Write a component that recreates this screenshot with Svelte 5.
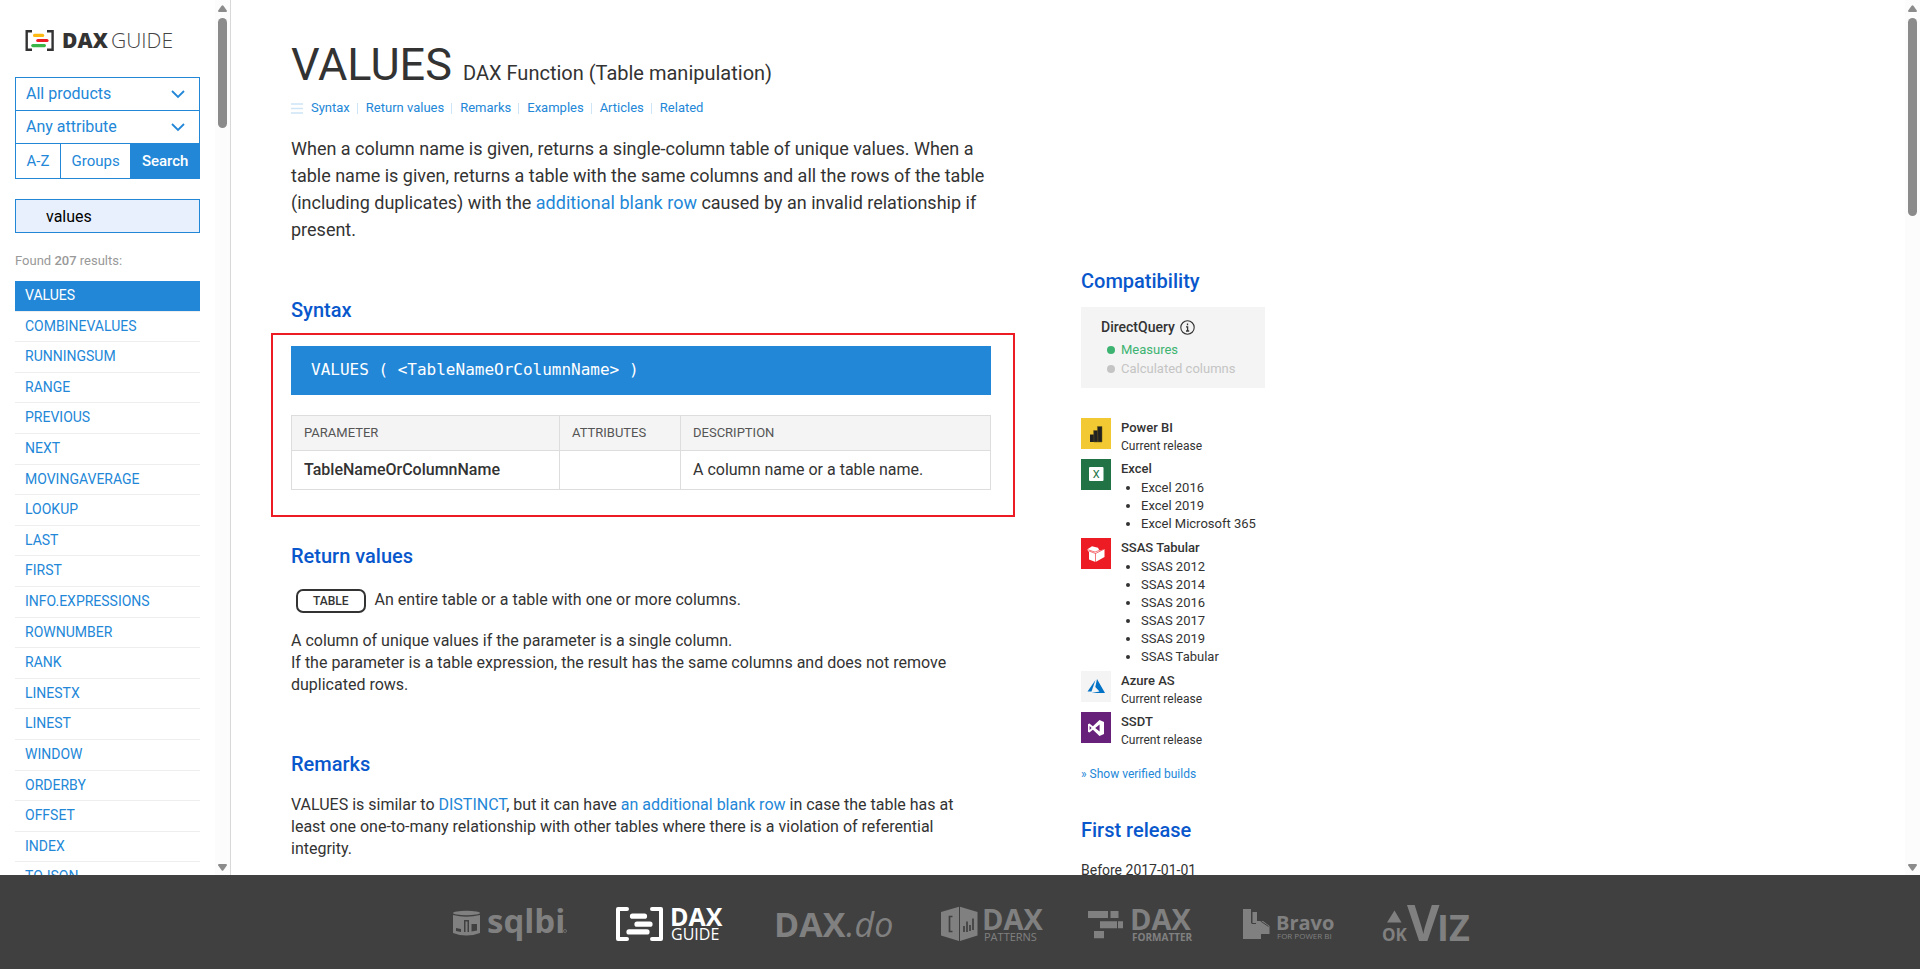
<script lang="ts">
    let product = $state('All products');
    let attribute = $state('Any attribute');
    let query = $state('values');
    let view = $state('Search');

    const views = ['A-Z', 'Groups', 'Search'];

    const results = [
        'VALUES', 'COMBINEVALUES', 'RUNNINGSUM', 'RANGE', 'PREVIOUS', 'NEXT', 'MOVINGAVERAGE',
        'LOOKUP', 'LAST', 'FIRST', 'INFO.EXPRESSIONS', 'ROWNUMBER', 'RANK', 'LINESTX', 'LINEST',
        'WINDOW', 'ORDERBY', 'OFFSET', 'INDEX', 'TOJSON'
    ];

    const toc = ['Syntax', 'Return values', 'Remarks', 'Examples', 'Articles', 'Related'];

    const products = [
        { id: 'powerbi', name: 'Power BI', versions: [] },
        { id: 'excel', name: 'Excel', versions: ['Excel 2016', 'Excel 2019', 'Excel Microsoft 365'] },
        { id: 'ssas', name: 'SSAS Tabular', versions: ['SSAS 2012', 'SSAS 2014', 'SSAS 2016', 'SSAS 2017', 'SSAS 2019', 'SSAS Tabular'] },
        { id: 'azure', name: 'Azure AS', versions: [] },
        { id: 'ssdt', name: 'SSDT', versions: [] }
    ];
</script>

{#snippet scrollbar(size: number)}
    <div class="scrollbar" aria-hidden="true">
        <svg width="9" height="7" viewBox="0 0 9 7"><path d="M3.6 .8Q4.5-.4 5.4.8L8.8 5.6Q9.2 7 8 7H1Q-.2 7 .2 5.6Z" /></svg>
        <div class="thumb" style="height: {size}px"></div>
        <svg class="down" width="9" height="7" viewBox="0 0 9 7"><path d="M3.6 6.2Q4.5 7.4 5.4 6.2L8.8 1.4Q9.2 0 8 0H1Q-.2 0 .2 1.4Z" /></svg>
    </div>
{/snippet}

{#snippet chevron()}
    <svg class="chevron" width="14" height="9" viewBox="0 0 14 9"><path d="M1 1l6 6 6-6" fill="none" stroke="currentColor" stroke-width="1.8" /></svg>
{/snippet}

<div class="app">
    <div class="body">
        <aside class="sidebar">
            <div class="sidebar-content">
                <a class="logo" href="#home" aria-label="DAX Guide">
                    <svg width="150" height="24" viewBox="0 0 150 24">
                        <g fill="none" stroke="#333" stroke-width="2.4">
                            <path d="M7 2.2H1.7v18.6H7M22 2.2h5.6v18.6H22" />
                        </g>
                        <g stroke-width="3.2" stroke-linecap="round">
                            <path d="M9.6 6.4h8" stroke="#fdb913" />
                            <path d="M12.8 11.5h9.2" stroke="#ed1c24" />
                            <path d="M7.8 16.6h11.6" stroke="#39b54a" />
                        </g>
                        <text x="37" y="19" font-size="21" font-weight="800" fill="#333">DAX</text>
                        <text x="86" y="19" font-size="21" font-weight="300" fill="#444">GUIDE</text>
                    </svg>
                </a>

                <div class="filters">
                    <div class="select">
                        <select aria-label="Product" bind:value={product}>
                            <option>All products</option>
                            <option>Power BI</option>
                            <option>Excel</option>
                        </select>
                        {@render chevron()}
                    </div>
                    <div class="select">
                        <select aria-label="Attribute" bind:value={attribute}>
                            <option>Any attribute</option>
                            <option>Deprecated</option>
                        </select>
                        {@render chevron()}
                    </div>
                    <div class="views">
                        {#each views as name}
                            <button class:active={view === name} onclick={() => (view = name)}>{name}</button>
                        {/each}
                    </div>
                </div>

                <input class="search" type="text" aria-label="Search functions" bind:value={query} />
                <p class="found">Found <b>207</b> results:</p>

                <ul class="results">
                    {#each results as name, i}
                        <li class:current={i === 0}><a href="#{name}">{name}</a></li>
                    {/each}
                </ul>
            </div>
            {@render scrollbar(110)}
        </aside>

        <main class="page">
            <div class="content">
                <header>
                    <h1>VALUES <small>DAX Function (Table manipulation)</small></h1>
                    <nav class="toc">
                        <svg width="12" height="11" viewBox="0 0 12 11"><path d="M0 1h12M0 5.5h12M0 10h12" stroke="#cde5f7" stroke-width="1.6" /></svg>
                        {#each toc as name}
                            <a href="#{name}">{name}</a>
                        {/each}
                    </nav>
                    <p class="intro">
                        When a column name is given, returns a single-column table of unique values. When a table
                        name is given, returns a table with the same columns and all the rows of the table
                        (including duplicates) with the <a href="#blank-row">additional blank row</a> caused by an
                        invalid relationship if present.
                    </p>
                </header>

                <div class="columns">
                    <article>
                        <h2>Syntax</h2>
                        <div class="highlight">
                            <pre>VALUES ( &lt;TableNameOrColumnName&gt; )</pre>
                            <table>
                                <colgroup><col class="col-name" /><col class="col-attr" /><col /></colgroup>
                                <thead>
                                    <tr><th>Parameter</th><th>Attributes</th><th>Description</th></tr>
                                </thead>
                                <tbody>
                                    <tr><td><b>TableNameOrColumnName</b></td><td></td><td>A column name or a table name.</td></tr>
                                </tbody>
                            </table>
                        </div>

                        <h2>Return values</h2>
                        <div class="return-type">
                            <span class="badge">TABLE</span>
                            <span>An entire table or a table with one or more columns.</span>
                        </div>
                        <p class="return-text">
                            A column of unique values if the parameter is a single column.<br />
                            If the parameter is a table expression, the result has the same columns and does not
                            remove duplicated rows.
                        </p>

                        <h2 class="spaced">Remarks</h2>
                        <p>
                            VALUES is similar to <a href="#DISTINCT">DISTINCT</a>, but it can have
                            <a href="#blank-row">an additional blank row</a> in case the table has at least one
                            one-to-many relationship with other tables where there is a violation of referential
                            integrity.
                        </p>
                    </article>

                    <aside class="details">
                        <h2>Compatibility</h2>
                        <div class="directquery">
                            <h3>
                                DirectQuery
                                <svg width="15" height="15" viewBox="0 0 15 15">
                                    <circle cx="7.5" cy="7.5" r="6.7" fill="none" stroke="#333" stroke-width="1.1" />
                                    <path d="M7.5 3.4v1.8M6 6.8h1.6v4.2M6 11h3.2" fill="none" stroke="#333" stroke-width="1.3" />
                                </svg>
                            </h3>
                            <p class="on">Measures</p>
                            <p class="off">Calculated columns</p>
                        </div>

                        <ul class="products">
                            {#each products as p}
                                <li class={p.id}>
                                    <svg width="30" height="31" viewBox="0 0 30 31">
                                        {#if p.id === 'powerbi'}
                                            <path d="M9 16.5h4V24H9z" fill="#222" />
                                            <path d="M12.6 12.5h4.4V24h-4z" fill="#222" stroke="#6b5a1a" stroke-width=".5" />
                                            <path d="M16.4 8.5H21V24h-4z" fill="#222" stroke="#6b5a1a" stroke-width=".5" />
                                        {:else if p.id === 'excel'}
                                            <rect x="8" y="8" width="14.5" height="14" rx="1" fill="#fff" />
                                            <text x="15.2" y="19" font-size="11" text-anchor="middle" fill="#217346">X</text>
                                        {:else if p.id === 'ssas'}
                                            <path d="M6 11.5l5-3.300 6 1.500 1.500 3L23.500 11v8L14.500 24l-6.500-2.500V14z" fill="#fff" />
                                            <path d="M8 13l6.500 2.500L23.500 11M14.500 15.500V24M6 11.500l8 2.500 4-1.500" fill="none" stroke="#ed1c24" stroke-width=".6" />
                                        {:else if p.id === 'azure'}
                                            <path d="M14.500 9L6.500 20.500h4z" fill="#0072c6" />
                                            <path d="M16 8l8 14H10.500l8-1.500-4.200-4.500z" fill="#0072c6" />
                                        {:else}
                                            <path d="M18.500 8L23 10v12l-4.500 2-6.600-6.200L8.400 20.500 7 19.800v-7.600l1.400-.7 3.500 2.700zM18.600 12.500L14.200 16l4.400 3.500zM8.600 14v4l2-2z" fill="#fff" fill-rule="evenodd" />
                                        {/if}
                                    </svg>
                                    <div>
                                        <h4>{p.name}</h4>
                                        {#if p.versions.length}
                                            <ul class="versions">
                                                {#each p.versions as version}
                                                    <li>{version}</li>
                                                {/each}
                                            </ul>
                                        {:else}
                                            <p>Current release</p>
                                        {/if}
                                    </div>
                                </li>
                            {/each}
                        </ul>
                        <a class="builds" href="#builds">» Show verified builds</a>

                        <h2>First release</h2>
                        <p class="release">Before 2017-01-01</p>
                    </aside>
                </div>
            </div>
            {@render scrollbar(198)}
        </main>
    </div>

    <footer>
        <a href="#sqlbi" aria-label="SQLBI">
            <svg width="114" height="40" viewBox="0 0 114 40">
                <ellipse cx="13.500" cy="11" rx="13.500" ry="2.200" />
                <path d="M0 13q13.500 3.400 27 0v18q-13.500 5-27 0z" />
                <path d="M3 26l5 1v3l-5-1zM11 18h5v12h-5zM18.500 22H24v6.500l-5.500 1z" fill="#404040" />
                <path d="M12.500 19.500h2V30h-2z" />
                <text x="34" y="31" font-size="33" font-weight="700">sqlbi</text>
                <circle cx="112" cy="29" r="1.500" fill="none" stroke="#808080" stroke-width=".7" />
            </svg>
        </a>
        <a class="current" href="#guide" aria-label="DAX Guide">
            <svg width="112" height="40" viewBox="0 0 112 40">
                <path d="M11 7H2v30h9M36 7h9v30h-9" fill="none" stroke="#fff" stroke-width="4" stroke-linejoin="round" stroke-linecap="round" />
                <path d="M16.500 14.200h12M21 22.200h13M13 29.900h18" stroke="#fff" stroke-width="5.200" stroke-linecap="round" />
                <text x="54" y="24" font-size="25" font-weight="700">DAX</text>
                <text x="55" y="38" font-size="16">GUIDE</text>
            </svg>
        </a>
        <a href="#do" aria-label="DAX.do">
            <svg width="115" height="40" viewBox="0 0 115 40">
                <text x="-3" y="35" font-size="34" font-weight="700">DAX</text>
                <text x="69" y="35" font-size="34" font-style="italic">.do</text>
            </svg>
        </a>
        <a href="#patterns" aria-label="DAX Patterns">
            <svg width="98" height="40" viewBox="0 0 98 40">
                <path d="M0 10L18 4.700V39L0 33.500zM19 4.700L36.500 10v23.500L19 39z" />
                <path d="M11.500 14.500H8.500v15h3M23 30v-6M26 30V19.500M29 29v-6M32 28V16.500" fill="none" stroke="#404040" stroke-width="1.700" />
                <text x="41" y="28" font-size="29" font-weight="700">DAX</text>
                <text x="43" y="39" font-size="11">PATTERNS</text>
            </svg>
        </a>
        <a href="#formatter" aria-label="DAX Formatter">
            <svg width="106" height="40" viewBox="0 0 106 40">
                <path d="M0 9h20v7H0zM22.500 9h8v7h-8zM12 19.200h17v7H12zM30 19.200h5v7h-5zM6 29h10v7.200H6z" />
                <text x="42" y="28" font-size="29" font-weight="700">DAX</text>
                <text x="44" y="39" font-size="10" font-weight="700">FORMATTER</text>
            </svg>
        </a>
        <a href="#bravo" aria-label="Bravo for Power BI">
            <svg width="91" height="40" viewBox="0 0 91 40">
                <path d="M0 7h8v14h1.500V10H14v9h6l6.500 5v8H18v5H0z" />
                <path d="M8.500 21.500h4.500M17.500 19l8 5.500" stroke="#404040" stroke-width="1" />
                <text x="33" y="28" font-size="20" font-weight="700">Bravo</text>
                <text x="34" y="37" font-size="8">FOR POWER BI</text>
            </svg>
        </a>
        <a href="#okviz" aria-label="OKViz">
            <svg width="85" height="40" viewBox="0 0 85 40">
                <path d="M11.500 8.500L18.500 20.500H4z" />
                <text x="-1" y="39" font-size="17" font-weight="700">OK</text>
                <text x="24" y="39" font-size="50" font-weight="700">V</text>
                <text x="54" y="39" font-size="36" font-weight="700">IZ</text>
            </svg>
        </a>
    </footer>
</div>

<style>
    :global(body) {
        margin: 0;
        background: #fff;
    }

    .app {
        display: flex;
        flex-direction: column;
        height: 100vh;
        font: 16px/22px Roboto, sans-serif;
        color: #333;
    }

    .body {
        flex: 1;
        display: flex;
        min-height: 0;
    }

    h1, h2, h3, h4, p, ul, pre {
        margin: 0;
        padding: 0;
    }

    ul {
        list-style: none;
    }

    a {
        color: #2387d8;
        text-decoration: none;
    }

    b {
        font-weight: 500;
    }

    /* scrollbars */

    .scrollbar {
        flex: none;
        box-sizing: border-box;
        display: flex;
        flex-direction: column;
        align-items: center;
        gap: 6px;
        width: 15px;
        padding: 5px 0 4px;
        background: #fcfcfc;
        fill: #8b8b8b;
    }

    .scrollbar .down {
        margin-top: auto;
    }

    .thumb {
        width: 9px;
        border-radius: 5px;
        background: #8b8b8b;
    }

    /* sidebar */

    .sidebar {
        flex: none;
        display: flex;
        overflow: hidden;
        border-right: 1px solid #d8d8d8;
    }

    .sidebar-content {
        width: 185px;
        padding: 29px 15px 0;
        overflow: hidden;
    }

    .logo {
        display: block;
        height: 24px;
        margin: 0 0 24px 10px;
        font-family: "Open Sans", sans-serif;
    }

    .logo svg {
        overflow: visible;
    }

    .filters {
        border: 1px solid #2387d8;
    }

    .select {
        position: relative;
        border-bottom: 1px solid #2387d8;
    }

    select {
        display: block;
        appearance: none;
        width: 100%;
        height: 32px;
        padding: 0 10px;
        border: 0;
        background: #fff;
        font: 16px/22px Roboto, sans-serif;
        color: #2387d8;
    }

    .chevron {
        position: absolute;
        top: 12px;
        right: 14px;
        color: #2387d8;
        pointer-events: none;
    }

    .views {
        display: flex;
    }

    button {
        flex: auto;
        height: 34px;
        padding: 0;
        border: 0;
        border-right: 1px solid #2387d8;
        background: #fff;
        font: 15px/22px Roboto, sans-serif;
        color: #2387d8;
    }

    button:last-child {
        border-right: 0;
    }

    button.active {
        background: #2387d8;
        font-weight: 500;
        color: #fff;
    }

    .search {
        box-sizing: border-box;
        display: block;
        width: 100%;
        height: 34px;
        margin-top: 20px;
        padding: 0 30px;
        border: 1px solid #2387d8;
        background: #e8f0fe;
        font: 16px/22px Roboto, sans-serif;
        color: #000;
    }

    .found {
        margin: 18px 0 10px;
        font-size: 13px;
        line-height: 20px;
        color: #999;
    }

    .results {
        display: grid;
        grid-auto-rows: 31px 30px 31px 30px 31px;
        font-size: 14px;
        line-height: 28px;
    }

    .results li {
        padding-left: 10px;
        border-bottom: 1px solid #eee;
    }

    .results .current {
        background: #2387d8;
    }

    .results .current a {
        color: #fff;
    }

    /* page */

    .page {
        flex: 1;
        display: flex;
        min-width: 0;
        overflow: hidden;
    }

    .content {
        flex: 1;
        min-width: 0;
        padding: 38px 60px 0;
    }

    header {
        max-width: 700px;
    }

    h1 {
        font-size: 45px;
        line-height: 54px;
        font-weight: 400;
    }

    small {
        font-size: 20px;
        line-height: 28px;
    }

    .toc {
        display: flex;
        align-items: center;
        margin-top: 6px;
        font-size: 13px;
        line-height: 20px;
    }

    .toc a {
        padding-left: 7px;
    }

    .toc svg {
        margin-right: 1px;
    }

    .toc a + a {
        display: flex;
        align-items: center;
    }

    .toc a + a::before {
        content: '';
        width: 1px;
        height: 11px;
        margin-right: 8px;
        background: #cde5f7;
    }

    .intro {
        margin-top: 17px;
        font-size: 18px;
        line-height: 27px;
    }

    .columns {
        display: flex;
        gap: 90px;
        margin-top: 24px;
    }

    article {
        width: 700px;
        padding-top: 29px;
    }

    h2 {
        font-size: 20px;
        line-height: 28px;
        font-weight: 500;
        color: #0957cc;
    }

    .highlight {
        margin: 9px -24px 25px -20px;
        padding: 11px 22px 25px 18px;
        border: 2px solid #ed1c24;
    }

    pre {
        padding: 13px 20px 14px;
        background: #2387d8;
        font: 16px/22px "DejaVu Sans Mono", monospace;
        color: #fff;
    }

    table {
        width: 100%;
        margin-top: 20px;
        border-collapse: collapse;
        table-layout: fixed;
    }

    .col-name {
        width: 268px;
    }

    .col-attr {
        width: 121px;
    }

    th, td {
        padding: 8px 12px;
        border: 1px solid #ddd;
        text-align: left;
    }

    th {
        padding: 7px 12px;
        background: #f4f4f4;
        font-size: 13px;
        line-height: 20px;
        font-weight: 400;
        text-transform: uppercase;
        color: #555;
    }

    .return-type {
        display: flex;
        gap: 9px;
        margin: 19px 0 17px 5px;
    }

    .badge {
        padding: 0 15px;
        border: 2px solid #333;
        border-radius: 7px;
        font-size: 12px;
        line-height: 20px;
        font-weight: 500;
    }

    h2.spaced {
        margin: 54px 0 16px;
    }

    /* details column */

    .details {
        width: 184px;
    }

    .directquery {
        margin: 12px 0 30px;
        padding: 10px 20px;
        background: #f4f4f4;
        font-size: 13px;
        line-height: 19px;
    }

    h3 {
        display: flex;
        align-items: center;
        gap: 5px;
        margin-bottom: 3px;
        font-size: 14px;
        line-height: 20px;
        font-weight: 500;
    }

    .directquery p {
        display: flex;
        align-items: center;
        gap: 6px;
        padding-left: 6px;
    }

    .directquery p::before {
        content: '';
        width: 8px;
        height: 8px;
        border-radius: 50%;
        background: currentColor;
    }

    .on {
        color: #3cb371;
    }

    .off {
        color: #c4c4c4;
    }

    .products {
        display: grid;
        gap: 5px;
    }

    .products > li {
        display: flex;
        gap: 10px;
        align-items: flex-start;
    }

    .products svg {
        flex: none;
    }

    .powerbi svg { background: #f2c932; }
    .excel svg { background: #217346; }
    .ssas svg { background: #ed1c24; }
    .azure svg { background: #f4f4f4; }
    .ssdt svg { background: #68217a; }

    h4 {
        font-size: 13px;
        line-height: 20px;
        font-weight: 500;
    }

    .products p {
        font-size: 12px;
        line-height: 16px;
    }

    .versions {
        padding-left: 20px;
        list-style: disc;
        font-size: 13px;
        line-height: 18px;
    }

    .builds {
        display: block;
        margin: 18px 0 34px;
        font-size: 12px;
        line-height: 16px;
    }

    .release {
        margin-top: 16px;
        font-size: 14px;
        line-height: 20px;
    }

    /* footer */

    footer {
        flex: none;
        display: flex;
        justify-content: center;
        align-items: center;
        gap: 49px;
        height: 94px;
        background: #404040;
        font-family: "Open Sans", sans-serif;
    }

    footer a {
        height: 40px;
        fill: #808080;
    }

    footer svg {
        overflow: visible;
    }

    footer .current {
        fill: #fff;
    }
</style>
